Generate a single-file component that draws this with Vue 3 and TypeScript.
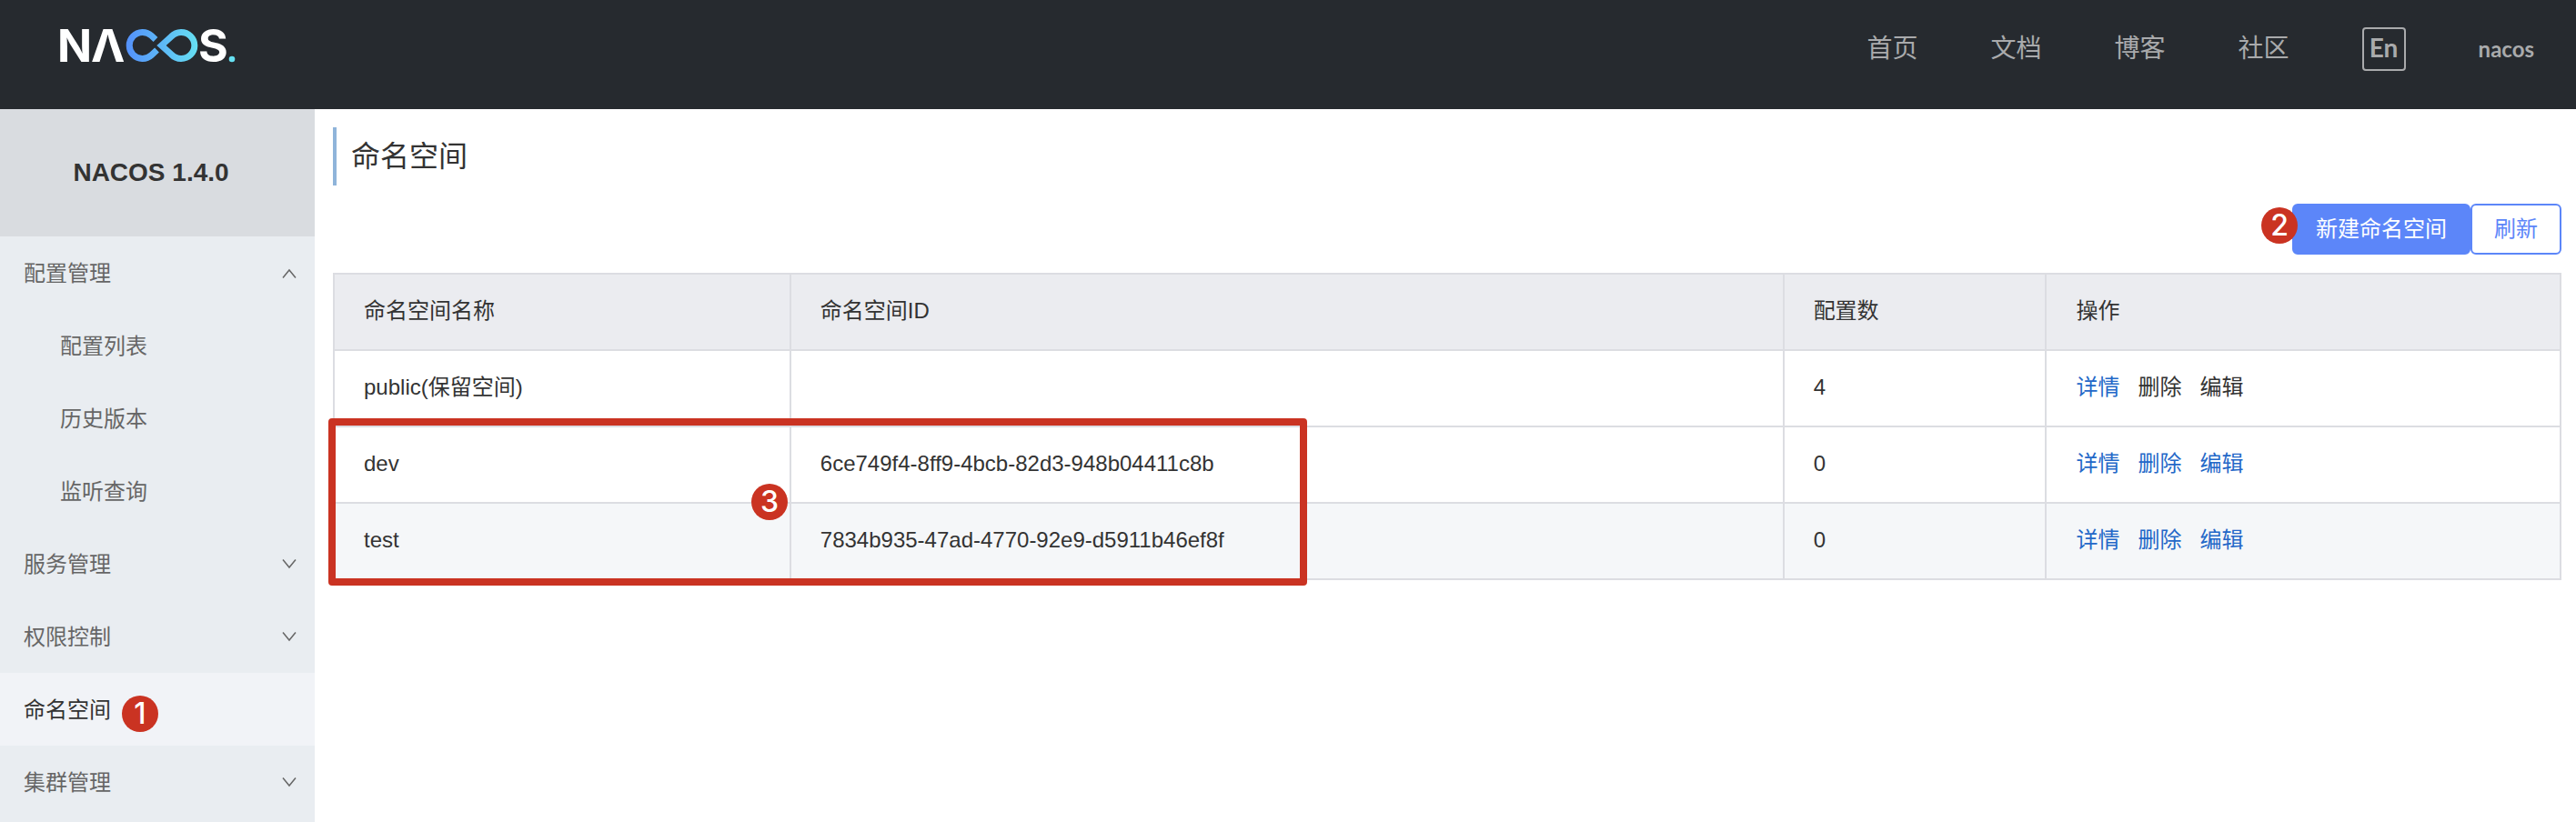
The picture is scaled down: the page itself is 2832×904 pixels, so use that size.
<script setup lang="ts">
interface MenuItem {
  label: string
  open?: boolean
  group?: boolean
  active?: boolean
  badge?: number
  children?: string[]
}

interface Namespace {
  name: string
  id: string
  count: number
  reserved?: boolean
}

const navLinks: string[] = ['首页', '文档', '博客', '社区']

const menu: MenuItem[] = [
  { label: '配置管理', group: true, open: true, children: ['配置列表', '历史版本', '监听查询'] },
  { label: '服务管理', group: true },
  { label: '权限控制', group: true },
  { label: '命名空间', active: true, badge: 1 },
  { label: '集群管理', group: true },
]

const columns: string[] = ['命名空间名称', '命名空间ID', '配置数', '操作']

const namespaces: Namespace[] = [
  { name: 'public(保留空间)', id: '', count: 4, reserved: true },
  { name: 'dev', id: '6ce749f4-8ff9-4bcb-82d3-948b04411c8b', count: 0 },
  { name: 'test', id: '7834b935-47ad-4770-92e9-d5911b46ef8f', count: 0 },
]
</script>

<template>
  <div class="page">
    <header class="topbar">
      <a class="logo" href="#" aria-label="NACOS">
        <svg width="194" height="40" viewBox="0 0 194 40" aria-hidden="true">
          <defs>
            <linearGradient id="loop" gradientUnits="userSpaceOnUse" x1="72" y1="0" x2="152" y2="0">
              <stop offset="0" stop-color="#5490fb" />
              <stop offset="1" stop-color="#66e0f2" />
            </linearGradient>
          </defs>
          <g class="logo-text">
            <text x="-3" y="38">N</text>
            <text x="34" y="38">Λ</text>
            <text x="152" y="38">S</text>
          </g>
          <g fill="none" stroke="url(#loop)" stroke-width="7">
            <path d="M105 13.500 L100.500 9.300 A14.500 14.500 0 1 0 100.500 30.700 L106.500 25" />
            <path d="M111.500 20 L122.500 10 A14.700 14.500 0 1 1 122.500 30 Z" stroke-linejoin="miter" />
          </g>
          <circle cx="189" cy="35" r="3.300" fill="#66e0f2" />
        </svg>
      </a>
      <nav class="nav">
        <a v-for="link in navLinks" :key="link" href="#">{{ link }}</a>
        <button class="lang" type="button">En</button>
        <a class="user" href="#">nacos</a>
      </nav>
    </header>

    <div class="body">
      <aside class="sidebar">
        <h1 class="product">NACOS 1.4.0</h1>
        <ul class="menu">
          <li v-for="item in menu" :key="item.label">
            <button v-if="item.group" class="item" type="button" :aria-expanded="!!item.open">
              <span>{{ item.label }}</span>
              <svg class="arrow" width="16" height="12" viewBox="0 0 16 12" aria-hidden="true">
                <path :d="item.open ? 'M1 10.500 L8 2 L15 10.500' : 'M1 0.500 L8 9 L15 0.500'" />
              </svg>
            </button>
            <a v-else class="item" :class="{ active: item.active }" href="#">
              <span class="anchor">{{ item.label }}<b v-if="item.badge" class="badge beside">{{ item.badge }}</b></span>
            </a>
            <ul v-if="item.children" class="menu">
              <li v-for="child in item.children" :key="child">
                <a class="item child" href="#">{{ child }}</a>
              </li>
            </ul>
          </li>
        </ul>
      </aside>

      <main class="content">
        <h2 class="title">命名空间</h2>
        <div class="actions">
          <button class="btn primary" type="button">新建命名空间<b class="badge before">2</b></button>
          <button class="btn" type="button">刷新</button>
        </div>
        <div class="table-wrap">
          <table>
            <colgroup>
              <col class="c-name" />
              <col class="c-id" />
              <col class="c-count" />
              <col />
            </colgroup>
            <thead>
              <tr>
                <th v-for="column in columns" :key="column" scope="col">{{ column }}</th>
              </tr>
            </thead>
            <tbody>
              <tr v-for="row in namespaces" :key="row.name">
                <td>{{ row.name }}</td>
                <td>{{ row.id }}</td>
                <td>{{ row.count }}</td>
                <td>
                  <div class="ops">
                    <a href="#">详情</a>
                    <template v-if="row.reserved">
                      <span>删除</span>
                      <span>编辑</span>
                    </template>
                    <template v-else>
                      <a href="#">删除</a>
                      <a href="#">编辑</a>
                    </template>
                  </div>
                </td>
              </tr>
            </tbody>
          </table>
          <div class="highlight"></div>
          <b class="badge on-table">3</b>
        </div>
      </main>
    </div>
  </div>
</template>

<style>
body {
  margin: 0;
}
</style>

<style scoped>
.page {
  display: flex;
  flex-direction: column;
  min-height: 100vh;
  background: #fff;
  color: #333;
  font-family: "Liberation Sans", "Noto Sans CJK SC", sans-serif;
  font-size: 24px;
  line-height: 36px;
}

a {
  color: inherit;
  text-decoration: none;
}

button {
  font: inherit;
  color: inherit;
  cursor: pointer;
}

.topbar {
  display: flex;
  justify-content: space-between;
  box-sizing: border-box;
  height: 120px;
  padding: 0 46px 12px 66px;
  background: #262a2f;
}

.logo {
  display: block;
  padding-top: 30px;
}

.logo svg {
  display: block;
  overflow: visible;
}

.logo-text {
  font-family: Inter, sans-serif;
  font-size: 50px;
  font-weight: 700;
  fill: #fff;
}

.nav {
  display: flex;
  align-items: center;
  gap: 80px;
  color: #a9aaac;
  font-size: 28px;
}

.lang {
  box-sizing: border-box;
  width: 48px;
  height: 48px;
  padding: 0 0 4px;
  border: 2px solid #a9aaac;
  border-radius: 4px;
  background: none;
  font-family: Lato, sans-serif;
  font-weight: 700;
  line-height: 40px;
}

.user {
  font-family: Lato, sans-serif;
  font-size: 24px;
  font-weight: 700;
}

.body {
  display: flex;
  flex: 1;
}

.sidebar {
  flex: none;
  width: 346px;
  background: #e9edf1;
  color: #666;
}

.product {
  box-sizing: border-box;
  height: 140px;
  margin: 0;
  padding-right: 14px;
  background: #d9dce0;
  color: #333;
  font-size: 28px;
  line-height: 140px;
  text-align: center;
}

.menu {
  margin: 0;
  padding: 0;
  list-style: none;
}

.item {
  display: flex;
  align-items: center;
  justify-content: space-between;
  box-sizing: border-box;
  width: 100%;
  height: 80px;
  padding: 2px 20px 0 26px;
  border: 0;
  background: none;
}

.child {
  padding-left: 66px;
}

.active {
  background: #f1f3f7;
  color: #333;
}

.arrow {
  fill: none;
  stroke: #666;
  stroke-width: 1.5;
}

.anchor {
  position: relative;
}

.badge {
  width: 40px;
  height: 40px;
  border-radius: 50%;
  background: #ca3322;
  color: #fff;
  font-family: Inter, sans-serif;
  font-size: 32px;
  font-weight: 500;
  line-height: 40px;
  text-align: center;
}

.beside {
  position: absolute;
  top: 2px;
  left: 108px;
}

.before {
  position: absolute;
  top: 2px;
  left: -36px;
}

.on-table {
  position: absolute;
  top: 232px;
  left: 460px;
}

.content {
  flex: 1;
  min-width: 0;
  padding: 20px 16px 20px 20px;
}

.title {
  margin: 0;
  padding-left: 16px;
  border-left: 4px solid #8fb4da;
  font-size: 32px;
  font-weight: 400;
  line-height: 64px;
}

.actions {
  display: flex;
  justify-content: flex-end;
  margin: 20px 0;
}

.btn {
  position: relative;
  box-sizing: border-box;
  height: 56px;
  padding: 0 24px;
  border: 2px solid #5c86f9;
  border-radius: 6px;
  background: #fff;
  color: #5c86f9;
}

.primary {
  background: #5c86f9;
  color: #fff;
}

.table-wrap {
  position: relative;
}

table {
  width: 100%;
  border: solid #dcdde2;
  border-width: 2px 0 0 2px;
  border-spacing: 0;
  table-layout: fixed;
}

.c-name {
  width: 20.5%;
}

.c-id {
  width: 44.6%;
}

.c-count {
  width: 11.8%;
}

th,
td {
  box-sizing: border-box;
  height: 84px;
  padding: 0 32px 2px;
  border: solid #dcdde2;
  border-width: 0 2px 2px 0;
  font-weight: 400;
  text-align: left;
}

th {
  background: #ebecf0;
}

tbody tr:last-child {
  background: #f5f7f9;
}

.ops {
  display: flex;
  gap: 20px;
}

.ops a {
  color: #2468c8;
}

.highlight {
  position: absolute;
  top: 160px;
  left: -5px;
  box-sizing: border-box;
  width: 43.9%;
  height: 184px;
  border: 8px solid #ca3322;
  border-radius: 4px;
  pointer-events: none;
}
</style>
